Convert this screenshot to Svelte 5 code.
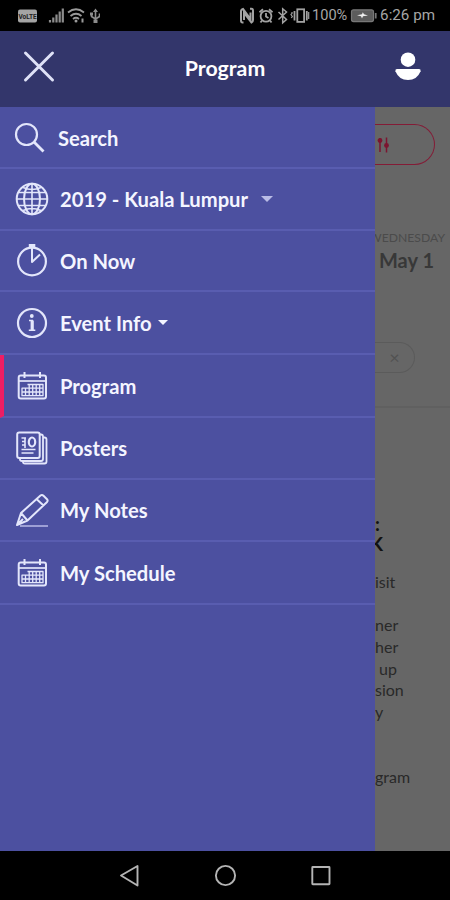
<script>
  const items = [
    { icon: 'search', label: 'Search', height: 62 },
    { icon: 'globe', label: '2019 - Kuala Lumpur', height: 62, caret: 'far' },
    { icon: 'timer', label: 'On Now', height: 61 },
    { icon: 'info', label: 'Event Info', height: 63, caret: 'near' },
    { icon: 'calendar', label: 'Program', height: 63, active: true },
    { icon: 'posters', label: 'Posters', height: 62 },
    { icon: 'pencil', label: 'My Notes', height: 62 },
    { icon: 'calendar', label: 'My Schedule', height: 63 }
  ];

  const copy = ['isit', '', 'ner', 'her', '\u00a0up', 'sion', 'y', '', '', 'gram'];
</script>

<div class="phone">
  <div class="status">
    <svg class="grow" width="88" height="31" viewBox="12 0 88 31">
      <rect x="18" y="9.500" width="19" height="13" rx="2" fill="#a4a4a4" />
      <text x="27.500" y="18.700" class="volte">VoLTE</text>
      <g stroke="#8c8c8c" stroke-width="2.200">
        <path d="M50 22.500v-2.500M53.300 22.500v-5M56.500 22.500v-8M59.700 22.500v-11M62.800 22.500V8.500" />
      </g>
      <g fill="none" stroke="#9a9a9a" stroke-width="1.800">
        <path d="M68 12.500q8-6.500 16 0M70.500 16q5.500-4.500 11 0M73 19q3-2.500 6 0" />
        <path d="M82.500 18.500v4" stroke-width="2" />
      </g>
      <circle cx="76" cy="21" r="1.500" fill="#9a9a9a" />
      <g fill="none" stroke="#8c8c8c" stroke-width="1.600">
        <path d="M95.500 10v12M91.500 13.500v3l4 2.500 4-2.500v-3" />
      </g>
      <path d="M93 12l2.500-3.500L98 12zM90 12.500h3v3h-3zM93.500 19.500h4V23h-4z" fill="#8c8c8c" />
    </svg>
    <svg width="72" height="31" viewBox="238 0 72 31" fill="none" stroke="#a2a2a2" stroke-width="1.800">
      <path d="M243.500 22.500h-1q-1.500 0-1.500-2v-9q0-2 2-2.500l7.500 10v-6.500M250 8.800h1.500q1.500 0 1.500 2V20q0 2-1.500 2.500l-7.500-9.500v7" stroke-width="2" />
      <circle cx="266" cy="16.300" r="5.400" />
      <path d="M266 13v3.500l2.500 1.500M259.500 12.200l3.500-3M272.500 12.200l-3.500-3M262 20.500l-1.500 2M270 20.500l1.500 2" />
      <path d="M278.500 12l8 7.500-3.800 3.300V8.800l3.800 3.200-8 7.500" stroke-width="1.500" />
      <rect x="297.300" y="9.300" width="6.800" height="12.600" />
      <path d="M294.500 11v9.500M306.800 11v9.500" />
      <path d="M292 12v1.500l-1 1 1.300 2-1 1.500M308.700 12v7" stroke-width="1.200" />
    </svg>
    <span class="percent">100%</span>
    <svg class="battery" width="27" height="31" viewBox="350 0 27 31">
      <rect x="351.500" y="9.800" width="22" height="11.800" rx="2" fill="#5c5c5c" stroke="#777" stroke-width="1.200" />
      <path d="M375.700 13v5.500" stroke="#777" stroke-width="1.800" />
      <path d="M357 15.300l5-1 .8-2 1.200 2 4 1.200-5 .8-1 2.200-1-2.200z" fill="#eee" />
    </svg>
    <span class="time">6:26 pm</span>
  </div>

  <header>
    <svg width="34" height="34" viewBox="0 0 34 34">
      <path d="M3.500 3L30.500 30M30.500 3L3.500 30" stroke="#dfe2f7" stroke-width="3" stroke-linecap="round" />
    </svg>
    <h1>Program</h1>
    <svg width="28" height="32" viewBox="0 0 28 32" fill="#fff">
      <circle cx="14" cy="8.700" r="7.300" />
      <path d="M3 18h22q2 0 1.600 2.200Q23 29 14 29T1.400 20.200Q1 18 3 18z" />
    </svg>
  </header>

  <main>
    <nav class="drawer">
      {#each items as item}
        <a href="#top" class="item" class:active={item.active} class:search={item.icon === 'search'} style:height="{item.height}px">
          <svg class="icon" width="34" height="34" viewBox="0 0 34 34">
            {#if item.icon === 'search'}
              <circle cx="13.500" cy="13.500" r="10.500" stroke-width="2.200" />
              <path d="M21 21l9.500 9.500" stroke-width="2.800" />
            {:else if item.icon === 'globe'}
              <circle cx="17" cy="17" r="15.300" />
              <ellipse cx="17" cy="17" rx="8" ry="15.300" />
              <path d="M17 1.700v30.600M1.700 17h30.600M4 10.500h26M4 23.500h26M8 5.500q9 4 18 0M8 28.500q9-4 18 0" stroke-width="1.600" />
            {:else if item.icon === 'timer'}
              <circle cx="17" cy="17.500" r="13.900" stroke-width="2.200" />
              <path d="M17 3.500v14.500l8-7.500" />
              <path d="M13.800 1.500h6.500" stroke-width="3.500" />
            {:else if item.icon === 'info'}
              <circle cx="17" cy="17" r="14" stroke-width="2.200" />
              <circle cx="16.800" cy="10" r="1.900" class="solid" />
              <path d="M17.200 14.500v9.500" stroke-width="3.200" />
              <path d="M14 14.500h4M13.800 24.300h6.500" stroke-width="1.600" />
            {:else if item.icon === 'calendar'}
              <rect x="3.700" y="6.500" width="27.300" height="23" rx="2" />
              <path d="M3.700 12h27.300" stroke-width="1.700" />
              <path d="M9.500 3v6M25 3v6" stroke-width="2" />
              <path d="M12.500 15.500h15.500v11.200H7v-7.500h21M7 23h21M10.500 19v7.700M14.200 15.500v11.200M17.700 15.500v11.200M21.200 15.500v11.200M24.700 15.500v11.200" stroke-width="1.300" />
            {:else if item.icon === 'posters'}
              <rect x="2.200" y="1.500" width="22.500" height="25.500" rx="2" />
              <path d="M5 27.500v1q0 1.500 2 1.500h19q2 0 2-2V5.500q0-2-2-2h-1M8 30.500v.5q0 1.500 2 1.500h19.500q2 0 2-2V8.500q0-2-2-2H28" stroke-width="1.800" />
              <ellipse cx="17" cy="11" rx="3.200" ry="4.500" stroke-width="2.200" />
              <path d="M6.500 7h4.500M7 10.500h3.500M7 14h3.500M10 7v10M6.500 18.500h14M6.500 22h12" stroke-width="1.600" />
            {:else}
              <path d="M2 32l4-12L25.500 2.500q1.500-1.200 3 .2l3.500 3.500q1.300 1.500-.2 3L12.500 27.500zM6 20l6.500 7.500M21.500 6l7 6.500M2 32l6-6" />
              <path d="M5 33h28" class="faint" stroke-width="1.800" />
            {/if}
          </svg>
          <span class="label">{item.label}</span>
          {#if item.caret}
            <i class="caret {item.caret}"></i>
          {/if}
        </a>
      {/each}
    </nav>

    <section class="page">
      <div class="filter">
        <svg width="15" height="18" viewBox="0 0 15 18" stroke="#7c1530" stroke-width="1.500" fill="#7c1530">
          <path d="M4 2v14M10.500 1.500v15" />
          <circle cx="4" cy="4.500" r="1.700" />
          <circle cx="10.500" cy="9.500" r="1.700" />
        </svg>
      </div>
      <div class="date">
        <span class="weekday">WEDNESDAY</span>
        <span class="day">May 1</span>
      </div>
      <div class="chip"><span>×</span></div>
      <div class="rule"></div>
      <h2>
        <span>:</span>
        <span class="clipped">K</span>
      </h2>
      <div class="copy">
        {#each copy as line}
          <p>{line}</p>
        {/each}
      </div>
    </section>
  </main>

  <footer>
    <svg width="270" height="49" viewBox="90 0 270 49" fill="none" stroke="#b4b4b4" stroke-width="1.900" stroke-linejoin="round">
      <path d="M121 24.500L137.500 15v19.500z" />
      <circle cx="225.500" cy="24.500" r="9.600" />
      <rect x="312.300" y="16" width="17.200" height="17.200" rx=".5" />
    </svg>
  </footer>
</div>

<style>
  :global(body) {
    background: #000;
  }

  .phone {
    width: 450px;
    height: 900px;
    display: flex;
    flex-direction: column;
    overflow: hidden;
    font-family: Lato, sans-serif;
  }

  .status {
    height: 31px;
    box-sizing: border-box;
    padding: 0 15px 0 12px;
    display: flex;
    align-items: center;
    background: #000;
    color: #a6a6a6;
    font: 15.2px/31px Roboto, sans-serif;
    white-space: nowrap;
  }

  .status svg {
    flex: none;
  }

  .status .grow {
    margin-right: auto;
  }

  .volte {
    font: bold 6.5px Roboto, sans-serif;
    text-anchor: middle;
    fill: #222;
  }

  .percent {
    width: 36px;
    margin-left: 2px;
    font-size: 14.6px;
  }

  .battery {
    margin: 0 3px 0 2px;
  }

  .time {
    width: 55px;
    text-align: right;
  }

  header {
    height: 76px;
    box-sizing: border-box;
    padding: 0 28px 0 22px;
    display: grid;
    grid-template-columns: 34px 1fr 28px;
    align-items: center;
    background: #33366b;
  }

  header svg {
    position: relative;
    top: -2px;
  }

  h1 {
    margin: 0 0 2px;
    color: #fff;
    font-size: 21.3px;
    font-weight: 700;
    text-align: center;
  }

  main {
    flex: 1;
    min-height: 0;
    display: flex;
  }

  .drawer {
    flex: 0 0 375px;
    background: #4c50a0;
  }

  .item {
    box-sizing: border-box;
    display: flex;
    align-items: center;
    padding-left: 15px;
    border-bottom: 2px solid #595db0;
    color: #f4f5ff;
    font-size: 20.2px;
    font-weight: 700;
    text-decoration: none;
    white-space: nowrap;
  }

  .item.search {
    padding: 2px 0 0 13px;
  }

  .item.active {
    padding-left: 11px;
    border-left: 4px solid #ee1d63;
  }

  .icon {
    flex: none;
    fill: none;
    stroke: #e3e6fb;
    stroke-width: 2;
    stroke-linejoin: round;
  }

  .solid {
    fill: #e3e6fb;
    stroke: none;
  }

  .faint {
    stroke: #a6a9dc;
  }

  .label {
    margin-left: 11px;
  }

  .caret {
    border: 5px solid transparent;
    border-top-color: #f4f5ff;
    border-bottom: 0;
    margin-left: 6px;
  }

  .caret.far {
    border-width: 6px 6px 0;
    border-top-color: #b9bce6;
    margin-left: 13px;
  }

  .page {
    flex: 1;
    min-width: 0;
    overflow: hidden;
    background: #666;
    color: #292929;
  }

  .filter {
    width: 60px;
    height: 41px;
    box-sizing: border-box;
    margin-top: 17px;
    padding-left: 1px;
    display: flex;
    align-items: center;
    border: 1.5px solid #841b36;
    border-left: 0;
    border-radius: 0 21px 21px 0;
  }

  .date {
    height: 52px;
    margin-top: 63px;
    padding-right: 5px;
    display: flex;
    flex-direction: column;
    align-items: flex-end;
  }

  .weekday {
    color: #4b4b4b;
    font-size: 12.2px;
    line-height: 20px;
  }

  .day {
    margin-right: 11px;
    color: #383838;
    font-size: 20px;
    font-weight: 700;
    line-height: 24px;
    white-space: nowrap;
  }

  .chip {
    width: 40px;
    height: 31px;
    box-sizing: border-box;
    margin-top: 62px;
    border: 1px solid #5b5b5b;
    border-left: 0;
    border-radius: 0 16px 16px 0;
    color: #525252;
    font-size: 18px;
    line-height: 28px;
    text-align: center;
  }

  .rule {
    height: 2px;
    margin-top: 33px;
    background: #606060;
  }

  h2 {
    margin: 106px 0 0;
    display: flex;
    flex-direction: column;
    color: #111;
    font-size: 19px;
    font-weight: 700;
    line-height: 20px;
  }

  .clipped {
    margin-left: -5px;
  }

  .copy {
    margin-top: 17px;
    font-size: 16px;
    line-height: 21.7px;
  }

  .copy p {
    height: 21.7px;
    margin: 0;
    white-space: nowrap;
  }

  footer {
    height: 49px;
    display: flex;
    justify-content: center;
    background: #000;
  }
</style>
